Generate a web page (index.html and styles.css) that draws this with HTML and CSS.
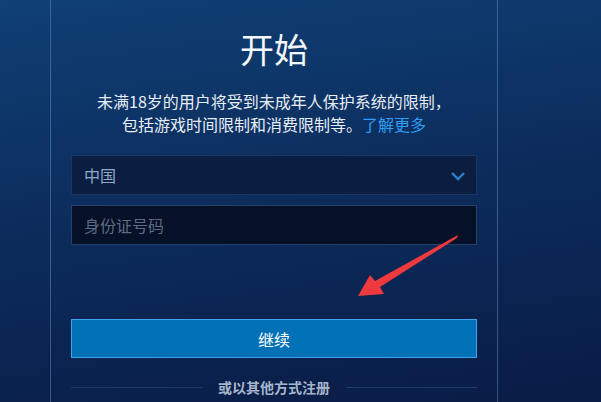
FILE: index.html
```html
<!DOCTYPE html>
<html lang="zh-CN">
<head>
    <meta charset="UTF-8">
    <meta name="viewport" content="width=device-width, initial-scale=1.0">
    <title>开始</title>
    <link rel="stylesheet" href="styles.css">
</head>
<body>
    <div class="panel">
        <h1>开始</h1>
        <p class="notice">未满18岁的用户将受到未成年人保护系统的限制，<br>包括游戏时间限制和消费限制等。<a href="#">了解更多</a></p>

        <form class="form">
            <div class="select">
                <span>中国</span>
                <svg class="chevron" width="16" height="10" viewBox="0 0 16 10">
                    <path d="M2 2 L8 8 L14 2" fill="none" stroke="#2d80c8" stroke-width="2.4"/>
                </svg>
            </div>
            <input type="text" class="id-input" placeholder="身份证号码">
            <button type="button" class="continue-btn">继续</button>
        </form>

        <div class="divider"><span>或以其他方式注册</span></div>
    </div>

    <!-- annotation arrow -->
    <svg class="arrow" width="601" height="402" viewBox="0 0 601 402">
        <polygon points="358,296 370,275 375,281 458,235 457,238 380,287 384,294" fill="#ee3a3e"/>
    </svg>
</body>
</html>
```

FILE: styles.css
```css
* {
    margin: 0;
    padding: 0;
    box-sizing: border-box;
}

body {
    font-family: "Noto Sans CJK SC", "Noto Sans", sans-serif;
    background: linear-gradient(172deg, #104074 0%, #0c2d5e 45%, #091c45 100%);
    height: 402px;
    overflow: hidden;
    color: #fff;
}

.panel {
    margin-left: 50px;
    width: 448px;
    height: 402px;
    border-left: 1px solid rgba(110, 150, 205, 0.45);
    border-right: 1px solid rgba(110, 150, 205, 0.45);
    padding: 28px 20px 0;
    text-align: center;
}

h1 {
    font-size: 34px;
    line-height: 42px;
    font-weight: 400;
    color: #f4f7fb;
}

.notice {
    margin-top: 20px;
    font-size: 16px;
    line-height: 23px;
    color: #e8eef6;
}

.notice a {
    color: #2f9df2;
    text-decoration: none;
}

.form {
    margin-top: 19px;
}

.select {
    height: 40px;
    display: flex;
    align-items: center;
    justify-content: space-between;
    padding: 0 10px 0 12px;
    background: #0b1d40;
    border: 1px solid #1a3763;
    font-size: 16px;
    color: #8fa8c8;
}

.chevron {
    margin-top: 1px;
}

.id-input {
    display: block;
    width: 100%;
    height: 40px;
    margin-top: 10px;
    padding: 0 12px;
    background: #061026;
    border: 1px solid #21406c;
    font-family: inherit;
    font-size: 16px;
    color: #ccc;
    outline: none;
}

.id-input::placeholder {
    color: #5d6c82;
}

.continue-btn {
    display: block;
    width: 100%;
    height: 39px;
    margin-top: 74px;
    background: #0071b7;
    border: 1px solid #3ea3ec;
    font-family: inherit;
    font-size: 16px;
    color: #fff;
    cursor: pointer;
}

.divider {
    margin-top: 19px;
    display: flex;
    align-items: center;
    gap: 16px;
    font-size: 14px;
    line-height: 20px;
    font-weight: 700;
    color: #a6b5cb;
}

.divider::before,
.divider::after {
    content: "";
    flex: 1;
    height: 1px;
    background: #1f3a64;
}

.arrow {
    position: absolute;
    left: 0;
    top: 0;
    pointer-events: none;
}
```
